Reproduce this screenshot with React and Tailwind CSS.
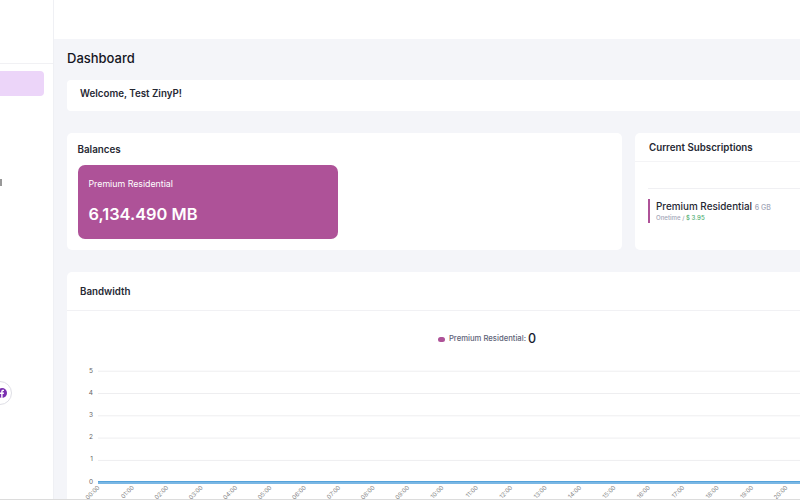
const hours = Array.from({ length: 21 }, (_, i) => `${String(i).padStart(2, "0")}:00`);
const ticks = [5, 4, 3, 2, 1, 0];

const Chart = () => (
  <svg width="733" height="134" className="block" style={{ fontFamily: "Inter, sans-serif" }}>
    {ticks.map((t, i) => (
      <g key={t}>
        <text x="26" y={6.500 + i * 22.2} fontSize="6.500" fill="#666" textAnchor="end">
          {t}
        </text>
        {t > 0 && <line x1="31" x2="733" y1={5.200 + i * 22.3} y2={5.200 + i * 22.3} stroke="#eeeef0" strokeWidth="1" />}
      </g>
    ))}
    <rect x="31" y="115" width="702" height="3" fill="#7ab7e4" />
    <rect x="31" y="115" width="702" height="1" fill="#55a3db" />
    {hours.map((h, i) => (
      <text
        key={h}
        x={33 + i * 34.4}
        y="122"
        fontSize="6"
        fill="#888"
        textAnchor="end"
        transform={`rotate(-45 ${33 + i * 34.4} 122)`}
      >
        {h}
      </text>
    ))}
  </svg>
);

const App = () => {
  return (
    <div className="relative w-[800px] h-[500px] overflow-hidden flex bg-white font-['Inter',sans-serif] text-[#181c32]">
      {/* Sidebar */}
      <aside className="w-[54px] shrink-0 border-r border-[#eff0f4] bg-white relative">
        <div className="h-[64px] border-b border-[#f1f1f4]" />
        <div className="mt-[7px] w-[44px] h-[25px] bg-[#ecd5f9] rounded-r-[4px]" />
        <div className="mt-[83px] w-[2px] h-[7px] bg-[#999]" />
        <div className="absolute left-[-12px] top-[381px] w-[24px] h-[24px] rounded-full bg-white border border-[#dfdfe6] flex items-center justify-center">
          <svg width="12" height="12" viewBox="0 0 12 12" className="ml-[3px]">
            <circle cx="6" cy="6" r="5" fill="#7a2fb0" />
            <path d="M6.6 11V7h1.2l.2-1.4H6.6v-.9c0-.4.2-.7.7-.7H8V2.800a6 6 0 0 0-1-.1c-1 0-1.800.6-1.800 1.800v1.100H4V7h1.200v4z" fill="#fff" />
          </svg>
        </div>
      </aside>

      {/* Main */}
      <div className="w-[746px] shrink-0 flex flex-col">
        <div className="h-[39px] bg-white shrink-0" />
        <main className="flex-1 bg-[#f4f5f9] pl-[13px]">
          <h1 className="text-[13px] leading-[20px] font-medium mt-[9px] text-[#14151f]">Dashboard</h1>

          <div className="mt-[12px] w-[800px] h-[31px] bg-white rounded-[4px] pl-[13px] pb-[3px] flex items-center text-[9.750px] font-semibold text-[#262833]">
            Welcome, Test ZinyP!
          </div>

          <div className="mt-[22px] flex gap-[13px] w-[900px]">
            <section className="w-[555px] h-[117px] bg-white rounded-[5px] pl-[10.500px] pr-[11px] pt-[10px]">
              <h2 className="text-[9.800px] leading-[13px] font-semibold text-[#262833]">Balances</h2>
              <div className="mt-[9px] w-[260.500px] h-[74px] bg-[#ae5298] rounded-[7px] pl-[11px] pt-[12px] text-white">
                <p className="text-[8.800px] leading-[13px]">Premium Residential</p>
                <p className="mt-[13px] text-[16.400px] leading-[22px] font-semibold">6,134.490 MB</p>
              </div>
            </section>

            <section className="w-[300px] h-[117px] bg-white rounded-[5px]">
              <div className="h-[29px] border-b border-[#f4f4f6] pl-[14px] pt-[2px] flex items-center text-[9.750px] font-semibold text-[#262833]">
                Current Subscriptions
              </div>
              <div className="mt-[26px] ml-[13px] border-t border-[#f0f0f3] pt-[10px]">
                <div className="border-l-2 border-[#ae5298] pl-[6px] h-[24px]">
                  <p className="text-[9.900px] leading-[13px] font-medium text-[#262833] pt-[1px]">
                    Premium Residential <span className="text-[7px] font-medium text-[#a1a5b7]">6 GB</span>
                  </p>
                  <p className="text-[6.100px] leading-[7px] font-medium text-[#a1a5b7]">
                    Onetime / <span className="text-[#4fae72]">$ 3.95</span>
                  </p>
                </div>
              </div>
            </section>
          </div>

          <section className="mt-[22px] w-[840px] h-[300px] bg-white rounded-[5px]">
            <div className="h-[39px] border-b border-[#f1f1f4] pl-[13px] pt-[3px] flex items-center text-[9.750px] font-semibold text-[#262833]">
              Bandwidth
            </div>
            <div className="h-[55px] flex items-center justify-center pt-[1px]">
              <span className="w-[7px] h-[5px] rounded-full bg-[#ae5298] mr-[4px]" />
              <span className="text-[7.700px] font-medium text-[#5e6278] mr-[2px]">Premium Residential:</span>
              <span className="text-[12.500px] font-medium text-[#181c32]">0</span>
            </div>
            <Chart />
          </section>
        </main>
      </div>

      {/* scrollbar edge at the bottom of the window */}
      <div className="absolute bottom-0 left-0 right-0 h-[1px] bg-[#dcdcdc]" />
    </div>
  );
};

export default App;
